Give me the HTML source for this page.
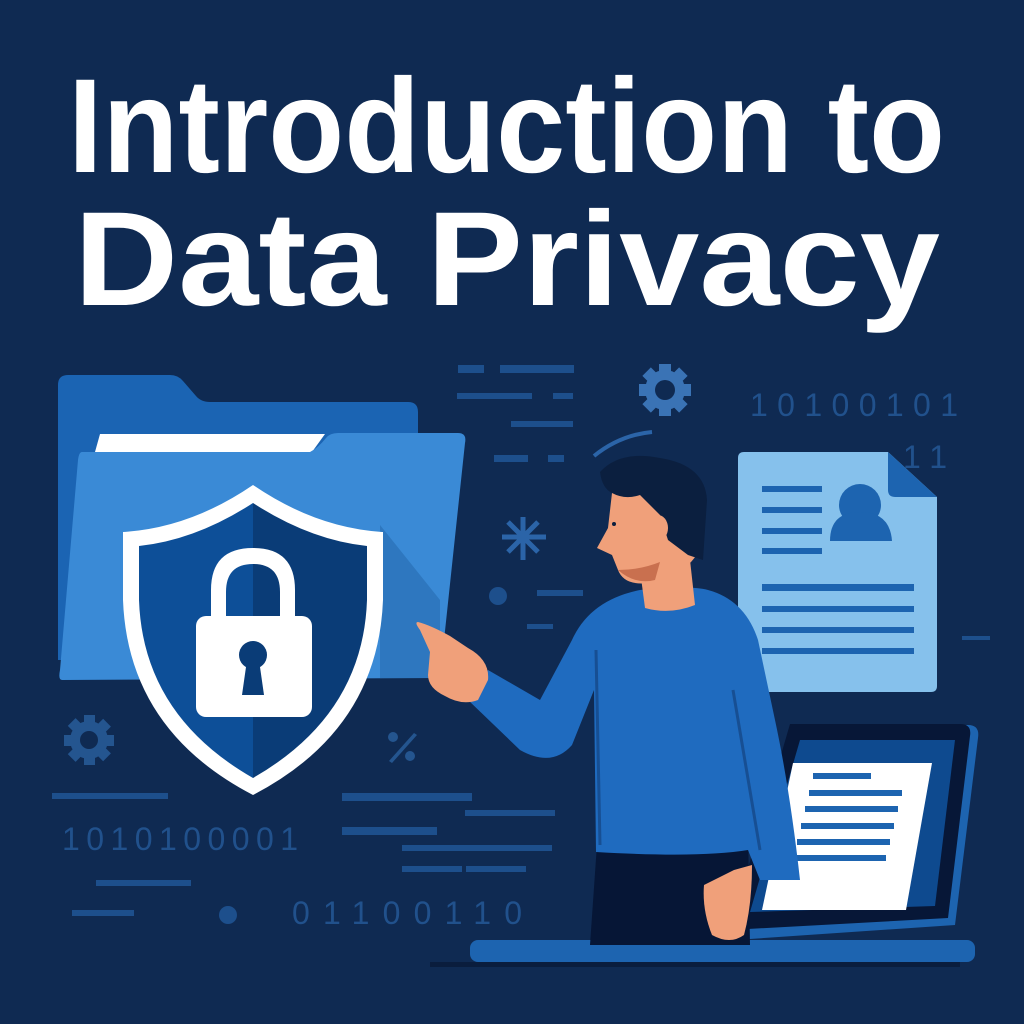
<!DOCTYPE html>
<html><head><meta charset="utf-8"><style>html,body{margin:0;padding:0;background:#0f2a52}svg{display:block}</style></head>
<body>
<svg width="1024" height="1024" viewBox="0 0 1024 1024" xmlns="http://www.w3.org/2000/svg">
<rect width="1024" height="1024" fill="#0f2a52"/>
<g font-family="Liberation Sans, sans-serif" fill="#ffffff" font-weight="bold">
<text x="68" y="172" font-size="134" textLength="877" lengthAdjust="spacingAndGlyphs">Introduction to</text>
<text x="74" y="305" font-size="134" textLength="866" lengthAdjust="spacingAndGlyphs">Data Privacy</text>
</g>
<g fill="#1d4f8c">
<rect x="458" y="365" width="26" height="8"/><rect x="500" y="365" width="74" height="8"/>
<rect x="457" y="393" width="75" height="6"/><rect x="553" y="393" width="20" height="6"/>
<rect x="511" y="421" width="62" height="6"/>
<rect x="494" y="455" width="34" height="7"/><rect x="548" y="455" width="16" height="7"/>
<circle cx="498" cy="596" r="9"/>
<rect x="537" y="590" width="46" height="6"/><rect x="527" y="624" width="26" height="5"/>
<rect x="52" y="793" width="116" height="6"/><rect x="342" y="793" width="130" height="8"/>
<rect x="342" y="827" width="95" height="8"/><rect x="465" y="810" width="90" height="6"/>
<rect x="96" y="880" width="95" height="6"/><rect x="402" y="845" width="150" height="6"/>
<rect x="402" y="866" width="60" height="6"/><rect x="466" y="866" width="60" height="6"/>
<rect x="72" y="910" width="62" height="6"/>
<circle cx="228" cy="915" r="9"/>
<rect x="962" y="636" width="28" height="4"/>
</g>
<g fill="none" stroke="#2b64a8" stroke-width="4"><path d="M594 456 Q620 435 652 432"/></g>
<g stroke="#2b64a8" stroke-width="5">
<line x1="523" y1="517" x2="523" y2="560"/><line x1="502" y1="537" x2="546" y2="537"/>
<line x1="508" y1="522" x2="538" y2="552"/><line x1="538" y1="522" x2="508" y2="552"/>
</g>
<g fill="#3a73b5">
<circle cx="665" cy="390" r="20"/>
<rect x="659" y="364" width="12" height="52"/><rect x="639" y="384" width="52" height="12"/>
<rect x="659" y="364" width="12" height="52" transform="rotate(45 665 390)"/><rect x="659" y="364" width="12" height="52" transform="rotate(-45 665 390)"/>
</g><circle cx="665" cy="390" r="10" fill="#0f2a52"/>
<g fill="#24558f">
<circle cx="89" cy="740" r="19"/>
<rect x="84" y="715" width="11" height="50"/><rect x="64" y="735" width="50" height="11"/>
<rect x="84" y="715" width="11" height="50" transform="rotate(45 89 740)"/><rect x="84" y="715" width="11" height="50" transform="rotate(-45 89 740)"/>
</g><circle cx="89" cy="740" r="9" fill="#0f2a52"/>
<g fill="#24558f"><circle cx="393" cy="737" r="5"/><circle cx="410" cy="756" r="5"/><path d="M389 761 L414 733 L417 735 L392 763Z"/></g>
<g font-family="Liberation Sans, sans-serif" fill="#21518c" font-size="32">
<text x="750" y="416" textLength="208" lengthAdjust="spacing">10100101</text>
<text x="903" y="468" textLength="44" lengthAdjust="spacing">11</text>
<text x="62" y="850" textLength="236" lengthAdjust="spacing">1010100001</text>
<text x="292" y="924" textLength="230" lengthAdjust="spacing">01100110</text>
</g>
<path d="M68 375 L170 375 Q178 375 183 381 L196 396 Q201 402 210 402 L408 402 Q418 402 418 412 L418 660 L58 660 L58 385 Q58 375 68 375Z" fill="#1b64b3"/>
<path d="M100 434 L325 434 L312 452 L95 452 Z" fill="#ffffff"/>
<path d="M82 452 L310 452 Q318 448 326 438 Q330 433 338 433 L458 433 Q467 433 465 443 L440 678 L62 680 Q58 680 60 670 L78 460 Q79 452 82 452Z" fill="#3a8ad6"/>
<path d="M380 525 L440 600 L440 678 L380 678Z" fill="#2a6fb5" opacity="0.7"/>
<path d="M253 485 Q190 528 123 532 L123 600 Q128 730 253 795 Q378 730 383 600 L383 532 Q316 528 253 485Z" fill="#ffffff"/>
<path d="M253 503 Q196 540 139 546 L139 600 Q143 715 253 778 Z" fill="#0d4f98"/>
<path d="M253 503 Q310 540 367 546 L367 600 Q363 715 253 778 Z" fill="#0a3c77"/>
<path d="M211 617 L211 590 Q211 548 253 548 Q295 548 295 590 L295 617 L280 617 L280 592 Q280 564 253 564 Q226 564 226 592 L226 617Z" fill="#ffffff"/>
<rect x="196" y="616" width="116" height="101" rx="10" fill="#ffffff"/>
<circle cx="253" cy="655" r="14" fill="#0a3c77"/>
<path d="M247 660 L259 660 L264 695 L242 695Z" fill="#0a3c77"/>
<path d="M744 452 L888 452 L937 497 L937 686 Q937 692 931 692 L744 692 Q738 692 738 686 L738 458 Q738 452 744 452Z" fill="#86c1ec"/>
<path d="M888 452 L888 490 Q888 497 895 497 L937 497Z" fill="#1d64b0"/>
<g fill="#1d64b0">
<rect x="762" y="486" width="60" height="6"/><rect x="762" y="507" width="60" height="6"/>
<rect x="762" y="528" width="60" height="6"/><rect x="762" y="548" width="60" height="6"/>
<circle cx="860" cy="505" r="21"/><path d="M830 541 Q830 512 860 512 Q890 512 892 541Z"/>
<rect x="762" y="584" width="152" height="7"/><rect x="762" y="606" width="152" height="6"/>
<rect x="762" y="627" width="152" height="6"/><rect x="762" y="648" width="152" height="6"/>
</g>
<path d="M800 725 L968 725 Q980 725 978 738 L955 925 L735 940 Z" fill="#1d64b0"/>
<path d="M790 724 L960 724 Q972 724 970 736 L948 918 L730 930 Z" fill="#071737"/>
<path d="M800 740 L955 740 L935 906 L750 912 Z" fill="#0e4a8f"/>
<path d="M793 763 L932 763 L906 910 L762 910 Z" fill="#ffffff"/>
<g fill="#1d64b0">
<rect x="813" y="773" width="58" height="6"/><rect x="809" y="790" width="93" height="6"/>
<rect x="805" y="806" width="93" height="6"/><rect x="801" y="823" width="93" height="6"/>
<rect x="797" y="839" width="93" height="6"/><rect x="793" y="855" width="93" height="6"/>
</g>
<rect x="470" y="940" width="505" height="22" rx="8" fill="#1d64b0"/>
<rect x="430" y="962" width="530" height="5" fill="#0a1d3d"/>
<path d="M598 830 L590 945 L750 945 L748 830Z" fill="#061636"/>
<path d="M640 590 Q690 585 708 590 Q745 600 758 640 L775 720 Q790 790 800 880 L760 880 L748 850 Q700 858 596 852 L594 690 L572 745 Q552 768 520 750 L468 700 L488 670 L540 700 L572 640 Q590 600 640 590Z" fill="#1f6bbf"/>
<path d="M596 650 L600 845" fill="none" stroke="#174f93" stroke-width="3"/>
<path d="M733 690 L760 850" fill="none" stroke="#174f93" stroke-width="3"/>
<path d="M640 570 L690 560 L695 605 Q670 615 645 608Z" fill="#f0a07a"/>
<path d="M612 493 Q610 470 640 462 Q690 455 700 490 L700 550 Q685 575 655 582 Q625 588 618 570 L612 555 L597 548 L608 528Z" fill="#f0a07a"/>
<path d="M600 472 Q620 450 660 458 Q705 465 707 500 L703 560 L688 555 L668 540 L660 515 Q650 505 640 495 Q625 500 612 493 Q602 488 600 472Z" fill="#0b1f3f"/>
<ellipse cx="658" cy="528" rx="10" ry="13" fill="#f0a07a"/>
<circle cx="614" cy="524" r="2" fill="#0b1f3f"/>
<path d="M618 570 Q640 570 660 562 L655 580 Q635 585 618 570Z" fill="#c9704f"/>
<path d="M418 622 Q430 625 450 636 L468 648 Q490 660 488 680 L478 700 Q462 706 445 696 Q428 688 428 675 L430 652 L420 630 Q414 622 418 622Z" fill="#f0a07a"/>
<path d="M734 870 L752 865 Q752 905 744 935 Q730 945 712 935 Q702 910 704 885Z" fill="#f0a07a"/>
</svg>
</body></html>
